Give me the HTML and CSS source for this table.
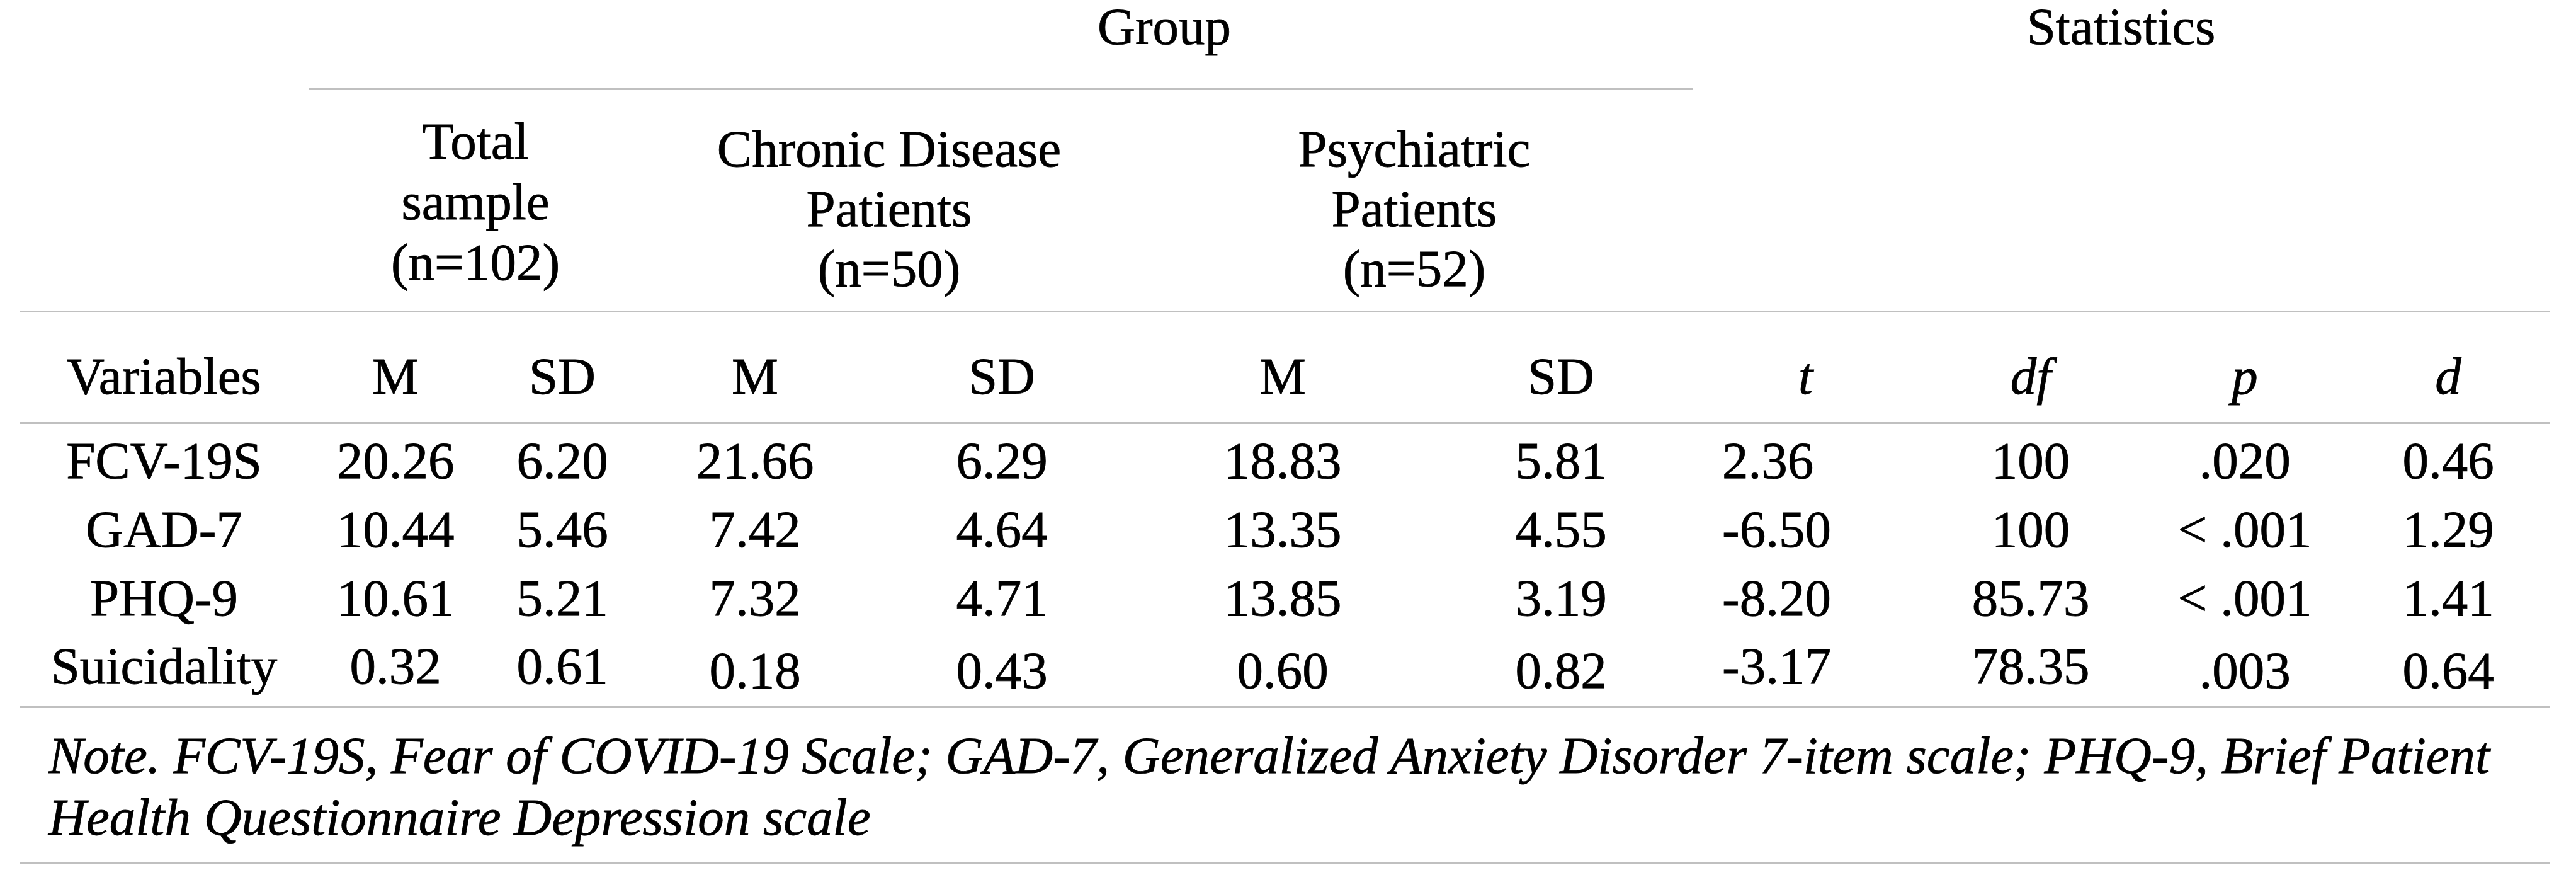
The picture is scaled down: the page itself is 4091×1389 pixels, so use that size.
FILE: index.html
```html
<!DOCTYPE html>
<html lang="en">
<head>
<meta charset="utf-8">
<title>Group statistics</title>
<link rel="stylesheet" href="styles.css">
</head>
<body>
<table class="stats">
  <colgroup>
    <col class="w-var">
    <col class="w-m1">
    <col class="w-sd1">
    <col class="w-m2">
    <col class="w-sd2">
    <col class="w-m3">
    <col class="w-sd3">
    <col class="w-t">
    <col class="w-df">
    <col class="w-p">
    <col class="w-d">
  </colgroup>
  <thead>
    <tr class="row-top">
      <th></th>
      <th colspan="6" class="group">Group</th>
      <th colspan="4" class="statistics">Statistics</th>
    </tr>
    <tr class="row-sub">
      <th></th>
      <th colspan="2" class="sub-total">Total<br>sample<br>(n=102)</th>
      <th colspan="2">Chronic Disease<br>Patients<br>(n=50)</th>
      <th colspan="2">Psychiatric<br>Patients<br>(n=52)</th>
      <th colspan="4"></th>
    </tr>
    <tr class="row-head">
      <th>Variables</th>
      <th>M</th>
      <th>SD</th>
      <th>M</th>
      <th>SD</th>
      <th>M</th>
      <th>SD</th>
      <th class="it">t</th>
      <th class="it">df</th>
      <th class="it">p</th>
      <th class="it">d</th>
    </tr>
  </thead>
  <tbody>
    <tr class="row-data">
      <td>FCV-19S</td><td>20.26</td><td>6.20</td><td>21.66</td><td>6.29</td><td>18.83</td><td>5.81</td><td class="tval">2.36</td><td>100</td><td>.020</td><td>0.46</td>
    </tr>
    <tr class="row-data">
      <td>GAD-7</td><td>10.44</td><td>5.46</td><td>7.42</td><td>4.64</td><td>13.35</td><td>4.55</td><td class="tval">-6.50</td><td>100</td><td>&lt; .001</td><td>1.29</td>
    </tr>
    <tr class="row-data">
      <td>PHQ-9</td><td>10.61</td><td>5.21</td><td>7.32</td><td>4.71</td><td>13.85</td><td>3.19</td><td class="tval">-8.20</td><td>85.73</td><td>&lt; .001</td><td>1.41</td>
    </tr>
    <tr class="row-data row-last">
      <td>Suicidality</td><td>0.32</td><td>0.61</td><td class="low">0.18</td><td class="low">0.43</td><td class="low">0.60</td><td class="low">0.82</td><td class="tval">-3.17</td><td>78.35</td><td class="low">.003</td><td class="low">0.64</td>
    </tr>
    <tr class="row-note">
      <td colspan="11" class="note">Note. FCV-19S, Fear of COVID-19 Scale; GAD-7, Generalized Anxiety Disorder 7-item scale; PHQ-9, Brief Patient Health Questionnaire Depression scale</td>
    </tr>
  </tbody>
</table>
</body>
</html>
```
FILE: styles.css
```css
html, body {
  margin: 0;
  padding: 0;
  background: #ffffff;
}

body {
  font-family: "Liberation Serif", "Times New Roman", serif;
  font-size: 83px;
  color: #000000;
  -webkit-text-stroke: 0.8px #000000;
}

.stats {
  margin-left: 31px;
  width: 4018px;
  table-layout: fixed;
  border-collapse: separate;
  border-spacing: 0;
}

.w-var { width: 459px; }
.w-m1  { width: 276px; }
.w-sd1 { width: 254px; }
.w-m2  { width: 358px; }
.w-sd2 { width: 426px; }
.w-m3  { width: 466px; }
.w-sd3 { width: 418px; }
.w-t   { width: 359px; }
.w-df  { width: 356px; }
.w-p   { width: 324px; }
.w-d   { width: 322px; }

.stats th,
.stats td {
  font-weight: normal;
  text-align: center;
  vertical-align: top;
  padding: 0;
  white-space: nowrap;
}

/* row 1: spanning headers */
.row-top th {
  line-height: 84px;
  padding-bottom: 56px;
}
.row-top .group {
  padding-left: 520px;
  border-bottom: 3px solid #c0c0c0;
}

/* row 2: sub-group headers */
.row-sub th {
  line-height: 95px;
  padding-top: 46px;
  padding-bottom: 19px;
  border-bottom: 3px solid #c0c0c0;
}
.row-sub .sub-total {
  padding-top: 33px;
  line-height: 96px;
}

/* row 3: column headers */
.row-head th {
  line-height: 96px;
  padding-top: 53px;
  padding-bottom: 25px;
  border-bottom: 3px solid #c0c0c0;
}
.it {
  font-style: italic;
}

/* data rows */
.row-data td {
  line-height: 96px;
  padding-top: 10px;
  padding-bottom: 3px;
}
.row-data .tval {
  text-align: left;
  padding-left: 47px;
}
.row-last td {
  padding-top: 9px;
  padding-bottom: 16px;
  border-bottom: 3px solid #c0c0c0;
}
.row-last td.low {
  padding-top: 16px;
  padding-bottom: 9px;
}

/* note */
.row-note .note {
  text-align: left;
  white-space: normal;
  font-style: italic;
  line-height: 98px;
  padding: 26px 0 22px 46px;
  border-bottom: 3px solid #c0c0c0;
}
```
